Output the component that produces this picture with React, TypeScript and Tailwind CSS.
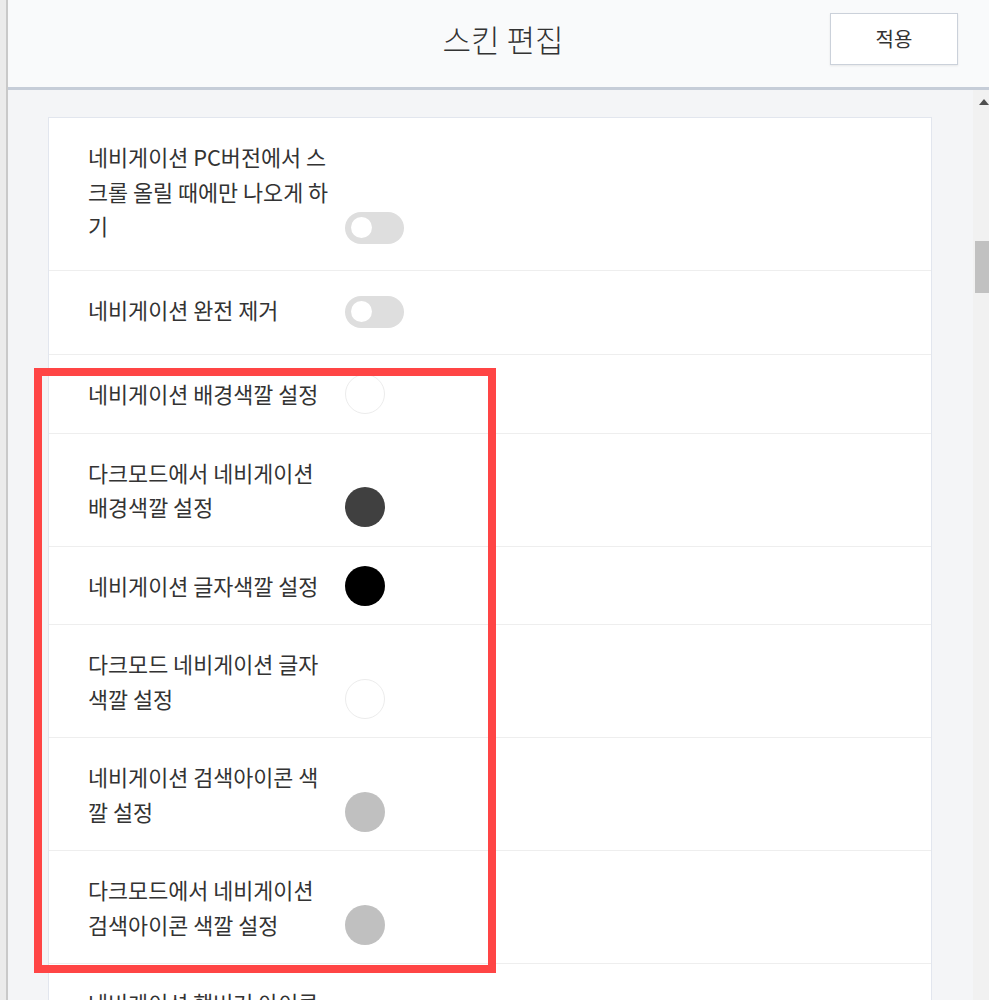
import React from 'react'

type Row =
  | { kind: 'toggle'; lines: string[] }
  | { kind: 'color'; lines: string[]; color: string; outlined?: boolean }

const rows: Row[] = [
  { kind: 'toggle', lines: ['네비게이션 PC버전에서 스', '크롤 올릴 때에만 나오게 하', '기'] },
  { kind: 'toggle', lines: ['네비게이션 완전 제거'] },
  { kind: 'color', lines: ['네비게이션 배경색깔 설정'], color: '#ffffff', outlined: true },
  { kind: 'color', lines: ['다크모드에서 네비게이션', '배경색깔 설정'], color: '#404040' },
  { kind: 'color', lines: ['네비게이션 글자색깔 설정'], color: '#000000' },
  { kind: 'color', lines: ['다크모드 네비게이션 글자', '색깔 설정'], color: '#ffffff', outlined: true },
  { kind: 'color', lines: ['네비게이션 검색아이콘 색', '깔 설정'], color: '#c0c0c0' },
  { kind: 'color', lines: ['다크모드에서 네비게이션', '검색아이콘 색깔 설정'], color: '#c0c0c0' },
  { kind: 'color', lines: ['네비게이션 햄버거 아이콘', '색깔 설정'], color: '#c0c0c0' },
]

function Toggle() {
  return (
    <div className="flex h-[32px] w-[59px] items-center rounded-full bg-[#dedede] pl-[6px]">
      <div className="h-[21px] w-[21px] rounded-full bg-white" />
    </div>
  )
}

function ColorDot({ color, outlined }: { color: string; outlined?: boolean }) {
  return (
    <div
      className={`h-[40px] w-[40px] rounded-full ${outlined ? 'border border-[#ececec]' : ''}`}
      style={{ backgroundColor: color }}
    />
  )
}

function SettingRow({ row }: { row: Row }) {
  const isToggle = row.kind === 'toggle'
  return (
    <div
      className={`flex items-end border-b border-[#eeeeee] pl-[39px] pt-[22px] ${
        isToggle ? 'pb-[26.5px]' : 'pb-[21px]'
      }`}
    >
      <div className="w-[257px] text-[21.8px] leading-[34.5px] text-[#333333]">
        {row.lines.map((line, i) => (
          <div key={i} className="whitespace-nowrap">
            {line}
          </div>
        ))}
      </div>
      {isToggle ? (
        <div className="flex h-[34.5px] items-end">
          <Toggle />
        </div>
      ) : (
        <div className="flex h-[34.5px] items-center">
          <ColorDot color={row.color} outlined={row.outlined} />
        </div>
      )}
    </div>
  )
}

export default function App() {
  return (
    <div className="relative flex h-[1000px] w-full overflow-hidden bg-[#f4f5f7] font-['Noto_Sans_CJK_KR','Noto_Sans',sans-serif]">
      {/* window edge on the left */}
      <div className="w-[6px] shrink-0 bg-[#ebebeb]" />
      <div className="w-[2px] shrink-0 bg-[#c9c9c9]" />

      <div className="flex min-w-0 flex-1 flex-col">
        <header className="flex h-[90px] shrink-0 items-center border-b-[3px] border-[#c6cdd8] bg-[#f9fafb] pb-[9px]">
          <div className="flex-1 pl-[40px]" />
          <h1 className="text-[31px] font-light text-[#333333]">스킨 편집</h1>
          <div className="flex flex-1 justify-end pr-[31px]">
            <button className="h-[52px] w-[128px] border border-[#cbd1da] bg-white text-[20px] text-[#333333] shadow-[0_1px_2px_rgba(0,0,0,0.08)]">
              적용
            </button>
          </div>
        </header>

        <div className="flex min-h-0 flex-1">
          <div className="min-w-0 flex-1 pl-[40px] pr-[41px] pt-[27px]">
            <div className="border border-[#e2e6ee] bg-white">
              {rows.map((row, i) => (
                <SettingRow key={i} row={row} />
              ))}
            </div>
          </div>

          {/* scrollbar */}
          <div className="flex w-[16px] shrink-0 flex-col items-center bg-[#f1f1f1]">
            <div className="mt-[9px] ml-[6px] h-0 w-0 border-x-[5px] border-b-[6px] border-x-transparent border-b-[#505050]" />
            <div className="mt-[136px] ml-[2px] h-[52px] w-[14px] bg-[#c1c1c1]" />
          </div>
        </div>
      </div>

      {/* red highlight box */}
      <div className="absolute left-[34px] top-[368px] h-[605px] w-[462px] border-[8px] border-[#ff4545]" />
    </div>
  )
}
